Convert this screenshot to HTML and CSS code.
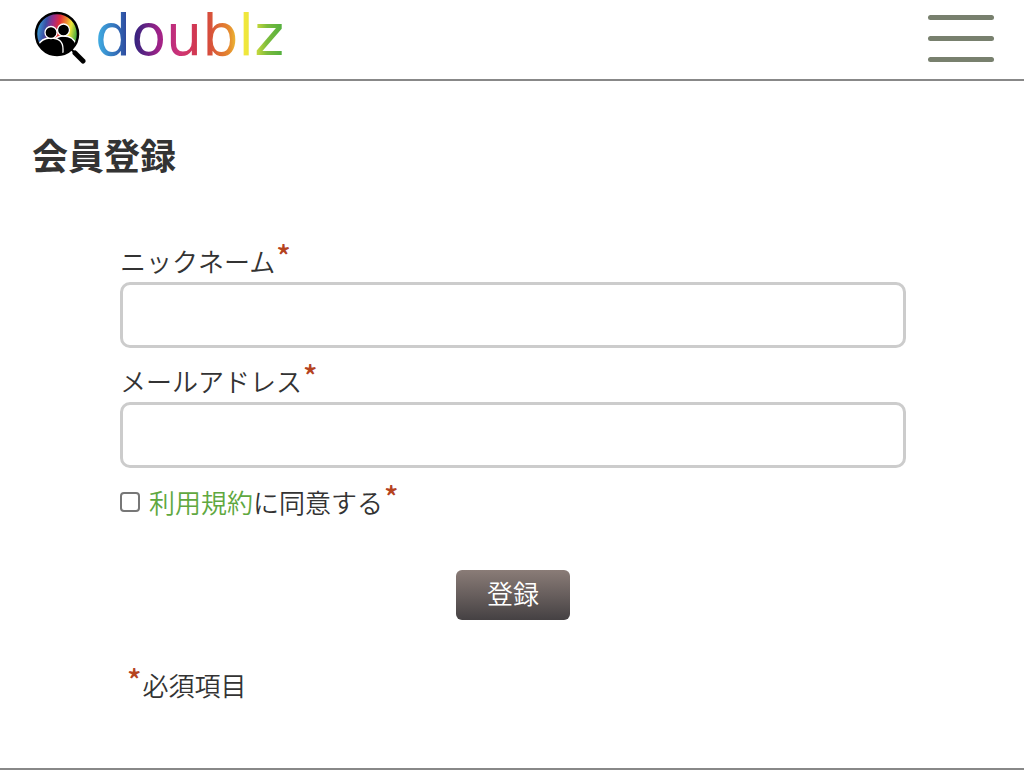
FILE: index.html
```html
<!DOCTYPE html>
<html lang="ja">
<head>
  <meta charset="UTF-8">
  <meta name="viewport" content="width=device-width, initial-scale=1.0">
  <title>会員登録 | doublz</title>
  <link rel="stylesheet" href="styles.css">
</head>
<body>

  <header class="site-header">
    <a href="#" class="logo">
      <svg class="logo-icon" width="52" height="54" viewBox="0 0 52 54" aria-hidden="true">
        <defs>
          <linearGradient id="rainbow" x1="0" y1="0.4" x2="1" y2="0.6">
            <stop offset="0" stop-color="#39a9dc"/>
            <stop offset="0.2" stop-color="#3b4fa5"/>
            <stop offset="0.36" stop-color="#a12a83"/>
            <stop offset="0.5" stop-color="#e22c3c"/>
            <stop offset="0.66" stop-color="#ef8a2c"/>
            <stop offset="0.78" stop-color="#f0e63a"/>
            <stop offset="0.94" stop-color="#4fae3f"/>
          </linearGradient>
          <clipPath id="lens"><circle cx="23" cy="23" r="21"/></clipPath>
        </defs>
        <circle cx="23" cy="23" r="21" fill="url(#rainbow)"/>
        <g clip-path="url(#lens)" stroke="#fff" stroke-width="1.3">
          <path d="M20 48V29q4-4 9-4 11 0 13 9v14z"/>
          <circle cx="29.500" cy="19" r="6"/>
          <path d="M4 48V35q3-8 13-8 12 0 12 11v10z"/>
          <circle cx="17" cy="21.500" r="6"/>
        </g>
        <circle cx="23" cy="23" r="21" fill="none" stroke="#000" stroke-width="2.500"/>
        <path d="M37 38l4 4" stroke="#000" stroke-width="2"/>
        <path d="M41 42l8 8" stroke="#000" stroke-width="5" stroke-linecap="round"/>
      </svg>
      <span class="logo-text">doublz</span>
    </a>
    <button type="button" class="menu-button" aria-label="メニュー">
      <span></span>
      <span></span>
      <span></span>
    </button>
  </header>

  <main>
    <h1>会員登録</h1>

    <form class="register-form">
      <label for="nickname">ニックネーム<span class="required">*</span></label>
      <input type="text" id="nickname" class="text-box">

      <label for="email">メールアドレス<span class="required">*</span></label>
      <input type="email" id="email" class="text-box">

      <div class="agree">
        <input type="checkbox" id="agree">
        <label for="agree"><a href="#">利用規約</a>に同意する<span class="required">*</span></label>
      </div>

      <button type="submit" class="submit-button">登録</button>

      <p class="note"><span class="required">*</span>必須項目</p>
    </form>
  </main>

  <footer class="site-footer"></footer>

</body>
</html>
```

FILE: styles.css
```css
* {
  box-sizing: border-box;
}

body {
  margin: 0;
  background-color: #fff;
  color: #333;
  font-family: "Noto Sans CJK JP", sans-serif;
  font-size: 26px;
  font-weight: 350;
  line-height: 40px;
}

.site-header {
  display: flex;
  align-items: center;
  justify-content: space-between;
  height: 81px;
  padding: 0 30px 3px 34px;
  border-bottom: 2px solid #888;
}

.logo {
  display: flex;
  align-items: center;
  gap: 9px;
  text-decoration: none;
}

.logo-text {
  padding-bottom: 6px;
  font-family: "DejaVu Sans", sans-serif;
  font-size: 57px;
  font-weight: 400;
  line-height: 68px;
  color: transparent;
  background: linear-gradient(90deg, #3fa9e0 2%, #2f57a8 15%, #34237f 21%, #a02288 34%, #cf3476 45%, #d23a40 57%, #e58a2e 71%, #f3e73c 78%, #e9e63c 83%, #7cbc3c 91%, #4fae3f);
  -webkit-background-clip: text;
  background-clip: text;
}

.menu-button {
  display: flex;
  flex-direction: column;
  gap: 16px;
  width: 66px;
  padding: 0;
  border: none;
  background: none;
  cursor: pointer;
}

.menu-button span {
  height: 5px;
  border-radius: 3px;
  background-color: #78806e;
}

h1 {
  margin: 0;
  padding: 47px 32px 61px;
  font-size: 36px;
  font-weight: 700;
  line-height: 52px;
}

.register-form {
  display: flex;
  flex-direction: column;
  padding: 0 118px 0 120px;
}

.required {
  margin: 0 1px;
  color: #b5431f;
  font-size: 30px;
  font-weight: 500;
  vertical-align: 4px;
  line-height: 0;
}

.text-box {
  width: 100%;
  height: 66px;
  margin: 1px 0 13px;
  padding: 0 16px;
  border: 3px solid #ccc;
  border-radius: 10px;
  background-color: #fff;
  font: inherit;
}

.agree {
  display: flex;
  align-items: center;
  gap: 9px;
  margin-top: 1px;
}

.agree input {
  appearance: none;
  width: 20px;
  height: 20px;
  margin: 0;
  border: 2px solid #777;
  border-radius: 4px;
  background-color: #fff;
}

.agree input:checked {
  background-color: #5a9f3c;
}

.agree a {
  color: #5fa83f;
  text-decoration: none;
}

.submit-button {
  align-self: center;
  width: 114px;
  height: 50px;
  margin: 48px 0 45px;
  padding: 0 0 4px;
  border: none;
  border-radius: 6px;
  background: linear-gradient(#8a7c77, #454143);
  color: #fff;
  font: inherit;
  cursor: pointer;
}

.note {
  margin: 0;
  padding-left: 6px;
}

.site-footer {
  margin-top: 63px;
  border-top: 2px solid #888;
}
```
